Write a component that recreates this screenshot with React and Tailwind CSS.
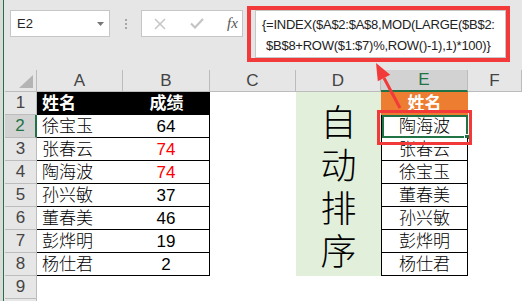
const data = [
  ['徐宝玉', '64', false, '陶海波'],
  ['张春云', '74', true, '张春云'],
  ['陶海波', '74', true, '徐宝玉'],
  ['孙兴敏', '37', false, '董春美'],
  ['董春美', '46', false, '孙兴敏'],
  ['彭烨明', '19', false, '彭烨明'],
  ['杨仕君', '2', false, '杨仕君'],
];

function TopBar() {
  return (
    <div className="h-[70px] flex items-start pt-[10px] shrink-0">
      <div className="ml-[5px] w-[100px] h-[27px] bg-white border border-[#c6c6c6] flex items-center justify-between pl-[6px] pr-[5px]">
        <span className="text-[13px] text-[#262626] leading-none">E2</span>
        <svg width="7" height="4" viewBox="0 0 7 4"><polygon points="0,0 7,0 3.5,4" fill="#777" /></svg>
      </div>
      <div className="w-[31px] h-[27px] flex flex-col items-center justify-center gap-[2px]">
        <div className="w-[2px] h-[2px] bg-[#a6a6a6]" />
        <div className="w-[2px] h-[2px] bg-[#a6a6a6]" />
        <div className="w-[2px] h-[2px] bg-[#a6a6a6]" />
      </div>
      <div className="w-[102px] h-[27px] bg-white border border-[#c6c6c6] flex items-center pl-[12px]">
        <svg width="12" height="12" viewBox="0 0 12 12">
          <line x1="1" y1="1" x2="11" y2="11" stroke="#c4c4c4" strokeWidth="1.4" />
          <line x1="11" y1="1" x2="1" y2="11" stroke="#c4c4c4" strokeWidth="1.4" />
        </svg>
        <svg className="ml-[24px]" width="14" height="11" viewBox="0 0 14 11">
          <polyline points="1,5.5 5,9.5 13,1" fill="none" stroke="#c4c4c4" strokeWidth="2.2" />
        </svg>
        <span className="ml-[23px] font-['Liberation_Serif',serif] italic text-[15px] text-[#555] leading-none">fx</span>
      </div>
      <div className="ml-[12px] w-[251px] h-[48px] bg-white border border-[#c6c6c6] pl-[6px] pt-[3px] text-[13px] leading-[21px] tracking-[-0.25px] text-[#222] whitespace-nowrap overflow-hidden">
        <div>{'{=INDEX($A$2:$A$8,MOD(LARGE($B$2:'}</div>
        <div className="pl-[4px]">{'$B$8+ROW($1:$7)%,ROW()-1),1)*100)}'}</div>
      </div>
    </div>
  );
}

const colHdr = 'bg-[#e6e6e6] border-r border-b border-[#bcbcbc] text-[17px] text-[#444] flex items-center justify-center';
const rowHdr = 'bg-[#e6e6e6] border-r border-b border-[#bcbcbc] text-[17px] text-[#444] flex items-center justify-center';

function Sheet() {
  return (
    <div className="flex-1 grid grid-cols-[32px_86px_87px_86px_85px_87px_1fr] grid-rows-[22px_repeat(10,23px)] bg-white text-[17px]">
      {/* header row */}
      <div className="bg-[#e6e6e6] border-r border-b border-[#bcbcbc] flex items-end justify-end pr-[3px] pb-[3px]">
        <svg width="14" height="13" viewBox="0 0 14 13"><polygon points="14,0 14,13 0,13" fill="#b4b4b4" /></svg>
      </div>
      <div className={colHdr}>A</div>
      <div className={colHdr}>B</div>
      <div className={colHdr}>C</div>
      <div className={colHdr}>D</div>
      <div className="bg-[#d2d2d2] border-r border-[#bcbcbc] border-b-2 border-b-[#217346] text-[17px] text-[#217346] flex items-center justify-center">E</div>
      <div className={colHdr}>F</div>

      {/* row 1 */}
      <div className={rowHdr}>1</div>
      <div className="bg-black text-white font-bold pl-[5px] flex items-center">姓名</div>
      <div className="bg-black text-white font-bold flex items-center justify-center">成绩</div>
      <div className="bg-white" />
      <div className="row-span-8 bg-[#e2efda] flex flex-col items-center pt-[10px] text-[36px] font-light text-black">
        <span className="leading-[43px]">自</span>
        <span className="leading-[43px]">动</span>
        <span className="leading-[43px]">排</span>
        <span className="leading-[43px]">序</span>
      </div>
      <div className="bg-[#ed7d31] text-white font-bold flex items-center justify-center">姓名</div>
      <div className="bg-white" />

      {data.map((r, i) => (
        <div key={i} className="contents">
          <div className={i === 0 ? 'bg-[#d2d2d2] border-b border-[#bcbcbc] border-r-2 border-r-[#217346] text-[17px] text-[#217346] flex items-center justify-center' : rowHdr}>{i + 2}</div>
          <div className="bg-white border-b border-black pl-[5px] flex items-center pt-[2px] font-light text-black">{r[0]}</div>
          <div className={r[2] ? 'bg-white border-b border-r border-black flex items-center justify-center pt-[2px] text-[#ff0000]' : 'bg-white border-b border-r border-black flex items-center justify-center pt-[2px] text-black'}>{r[1]}</div>
          <div className="bg-white" />
          <div className="relative bg-white border-l border-r border-b border-black flex items-center justify-center pt-[2px] font-light text-black">
            {r[3]}
            {i === 0 && (
              <>
                <div className="absolute top-0 left-0 -right-[1px] -bottom-[1px] border-2 border-[#217346]" />
                <div className="absolute -right-[3px] -bottom-[3px] w-[6px] h-[6px] bg-[#217346] border border-white" />
              </>
            )}
          </div>
          <div className="bg-white" />
        </div>
      ))}

      {/* row 9 */}
      <div className={rowHdr}>9</div>
      <div className="bg-white" />
      <div className="bg-white" />
      <div className="bg-white" />
      <div className="bg-white" />
      <div className="bg-white" />
      <div className="bg-white" />
      {/* row 10 (only its top edge is in view) */}
      <div className="bg-[#e6e6e6] border-r border-[#bcbcbc]" />
      <div className="bg-white" />
      <div className="bg-white" />
      <div className="bg-white" />
      <div className="bg-white" />
      <div className="bg-white" />
      <div className="bg-white" />
    </div>
  );
}

export default function App() {
  return (
    <div className="relative w-[522px] h-[301px] overflow-hidden bg-[#e6e6e6] flex font-['Liberation_Sans','Noto_Sans_CJK_SC',sans-serif]">
      <div className="w-[3px] bg-[#dadada] shrink-0" />
      <div className="w-[1px] bg-[#217346] shrink-0" />
      <div className="w-[1px] shrink-0" />
      <div className="flex-1 flex flex-col">
        <TopBar />
        <Sheet />
      </div>
      <div className="absolute left-[247px] top-[6px] w-[263px] h-[56px] border-[4px] border-[#f23a3a] pointer-events-none" />
      <div className="absolute left-[377px] top-[110px] w-[95px] h-[35px] border-[3px] border-[#f23a3a] pointer-events-none" />
      <svg className="absolute left-0 top-0 pointer-events-none" width="522" height="301" viewBox="0 0 522 301">
        <line x1="384" y1="78" x2="400" y2="108" stroke="#f23a3a" strokeWidth="3" />
        <polygon points="376,63 377.8,81.3 390.2,74.7" fill="#f23a3a" />
      </svg>
    </div>
  );
}
